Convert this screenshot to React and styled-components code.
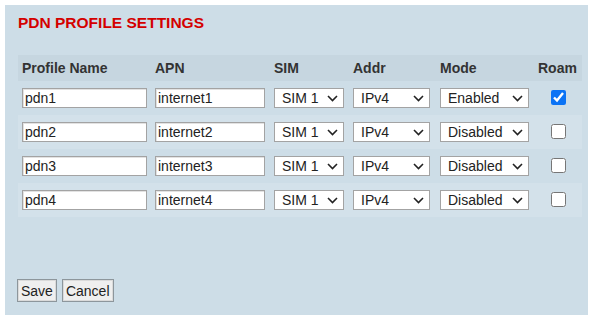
import React from "react";
import styled, { createGlobalStyle } from "styled-components";

const GlobalStyle = createGlobalStyle`
  body {
    margin: 5px;
    background: #ffffff;
    font-family: "Liberation Sans", Arial, sans-serif;
  }
`;

const Panel = styled.div`
  width: 583px;
  height: 310px;
  box-sizing: border-box;
  padding: 9px 6px 13px 13px;
  background: #cddde7;
  display: flex;
  flex-direction: column;
`;

const Title = styled.h2`
  margin: 0;
  font-size: 15.5px;
  line-height: 18px;
  font-weight: bold;
  color: #d40000;
`;

const Table = styled.div`
  margin-top: 23px;
  display: grid;
  grid-template-columns: 133px 119px 79px 87px 98px 1fr;
`;

const Row = styled.div`
  display: contents;
`;

const Cell = styled.div`
  height: ${(p) => (p.$head ? "26px" : "34px")};
  padding: 0 4px;
  display: flex;
  align-items: center;
  justify-content: ${(p) => (p.$center ? "center" : "flex-start")};
  background: ${(p) => (p.$head ? "#c6d6e0" : p.$even ? "#d3e1ea" : "transparent")};
`;

const HeadText = styled.span`
  font-size: 14px;
  font-weight: bold;
  color: #333333;
`;

const TextInput = styled.input`
  width: ${(p) => p.$w}px;
  height: 20px;
  box-sizing: border-box;
  margin: 0 0 1px 0;
  padding: 0 2px;
  border: 1px solid #a3a3a3;
  box-shadow: inset 1px 1px 0 #e2e2e2;
  background: #ffffff;
  font-family: "Liberation Sans", Arial, sans-serif;
  font-size: 14px;
  color: #222222;
  outline: none;
`;

const SelectWrap = styled.div`
  position: relative;
  width: ${(p) => p.$w}px;
  height: 20px;
  margin-left: ${(p) => p.$ml || 0}px;
  margin-bottom: 1px;
`;

const Select = styled.select`
  appearance: none;
  width: 100%;
  height: 100%;
  box-sizing: border-box;
  margin: 0;
  padding: 0 0 0 7px;
  border: 1px solid #a3a3a3;
  border-radius: 0;
  background: #ffffff;
  font-family: "Liberation Sans", Arial, sans-serif;
  font-size: 14px;
  color: #222222;
  outline: none;
`;

const Chevron = styled.svg`
  position: absolute;
  right: 6px;
  top: 7px;
  pointer-events: none;
`;

const Check = styled.input`
  width: 15px;
  height: 15px;
  margin: 0 0 1px 0;
  accent-color: #0b73f5;
`;

const Spacer = styled.div`
  flex: 1;
`;

const Buttons = styled.div`
  display: flex;
  gap: 5px;
  margin-left: -1px;
`;

const Button = styled.button`
  height: 23px;
  padding: 0 3px;
  border: 1px solid #8d969c;
  box-shadow: inset 0 0 0 1px #dadada;
  background: #efefef;
  font-family: "Liberation Sans", Arial, sans-serif;
  font-size: 14px;
  color: #222222;
`;

const ChevronIcon = () => (
  <Chevron width="11" height="7" viewBox="0 0 11 7">
    <path d="M1 1l4.5 4.5L10 1" fill="none" stroke="#222" strokeWidth="1.6" />
  </Chevron>
);

const Dropdown = ({ w, ml, value, options }) => (
  <SelectWrap $w={w} $ml={ml}>
    <Select defaultValue={value}>
      {options.map((o) => (
        <option key={o}>{o}</option>
      ))}
    </Select>
    <ChevronIcon />
  </SelectWrap>
);

const profiles = [
  { name: "pdn1", apn: "internet1", mode: "Enabled", roam: true },
  { name: "pdn2", apn: "internet2", mode: "Disabled", roam: false },
  { name: "pdn3", apn: "internet3", mode: "Disabled", roam: false },
  { name: "pdn4", apn: "internet4", mode: "Disabled", roam: false },
];

const headers = ["Profile Name", "APN", "SIM", "Addr", "Mode", "Roam"];

const App = () => {
  return (
    <>
      <GlobalStyle />
      <Panel>
        <Title>PDN PROFILE SETTINGS</Title>
        <Table>
          <Row>
            {headers.map((h) => (
              <Cell key={h} $head>
                <HeadText>{h}</HeadText>
              </Cell>
            ))}
          </Row>
          {profiles.map((p, i) => {
            const even = i % 2 === 1;
            return (
              <Row key={p.name}>
                <Cell $even={even}>
                  <TextInput $w={125} defaultValue={p.name} />
                </Cell>
                <Cell $even={even}>
                  <TextInput $w={110} defaultValue={p.apn} />
                </Cell>
                <Cell $even={even}>
                  <Dropdown w={70} value="SIM 1" options={["SIM 1", "SIM 2"]} />
                </Cell>
                <Cell $even={even}>
                  <Dropdown w={77} value="IPv4" options={["IPv4", "IPv6", "IPv4v6"]} />
                </Cell>
                <Cell $even={even}>
                  <Dropdown w={89} value={p.mode} options={["Enabled", "Disabled"]} />
                </Cell>
                <Cell $even={even} $center>
                  <Check type="checkbox" defaultChecked={p.roam} />
                </Cell>
              </Row>
            );
          })}
        </Table>
        <Spacer />
        <Buttons>
          <Button>Save</Button>
          <Button>Cancel</Button>
        </Buttons>
      </Panel>
    </>
  );
};

export default App;
